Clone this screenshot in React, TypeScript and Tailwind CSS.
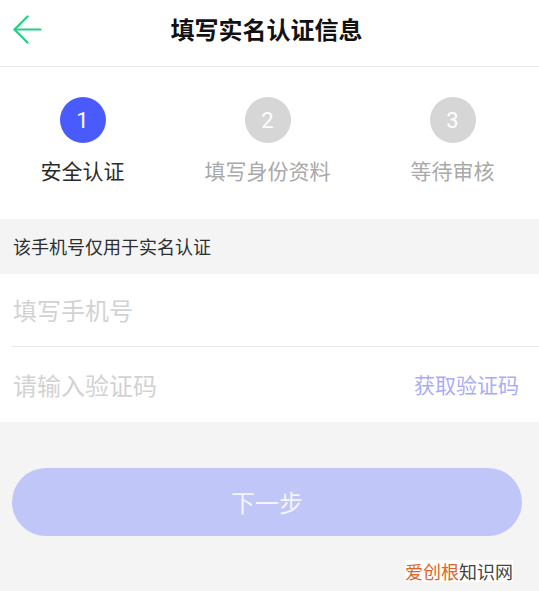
import React from 'react';

const steps = [
  { n: '1', label: '安全认证', active: true },
  { n: '2', label: '填写身份资料', active: false },
  { n: '3', label: '等待审核', active: false },
];

export default function App() {
  return (
    <div
      className="min-h-screen overflow-hidden bg-[#f4f4f4]"
      style={{ fontFamily: '"Noto Sans CJK SC", "Noto Sans", sans-serif' }}
    >
      {/* Header */}
      <div className="relative flex h-[67px] items-center justify-center border-b border-[#e6e6e6] bg-white pb-[9px]">
        <svg
          className="absolute left-[13px] top-[15px]"
          width="29"
          height="29"
          viewBox="0 0 29 29"
          fill="none"
          stroke="#27cf86"
          strokeWidth="2.2"
          strokeLinecap="round"
          strokeLinejoin="round"
        >
          <path d="M27.5 14.5H1.5" />
          <path d="M14.5 1.5L1.5 14.5L14.5 27.5" />
        </svg>
        <h1 className="-translate-x-[3px] text-[24px] font-bold leading-none text-[#111]">填写实名认证信息</h1>
      </div>

      {/* Steps */}
      <div className="h-[152px] bg-white pt-[30px]">
        <div className="-ml-[10px] flex">
          {steps.map(s => (
            <div key={s.n} className="flex w-[185px] shrink-0 flex-col items-center">
              <div
                className={`flex h-[46px] w-[46px] items-center justify-center rounded-full text-[22px] text-white ${
                  s.active ? 'bg-[#4a5bfd]' : 'bg-[#d6d6d6]'
                }`}
                style={{ fontFamily: 'Roboto, sans-serif' }}
              >
                {s.n}
              </div>
              <span
                className={`mt-[15px] whitespace-nowrap text-[21px] leading-[24px] ${
                  s.active ? 'text-[#2b2b2b]' : 'text-[#a9a9a9]'
                }`}
              >
                {s.label}
              </span>
            </div>
          ))}
        </div>
      </div>

      {/* Notice */}
      <div className="flex h-[55px] items-center pl-[13px] text-[18px] text-[#2e2e2e]">该手机号仅用于实名认证</div>

      {/* Inputs */}
      <div className="bg-white">
        <div className="ml-[12px] flex h-[73px] items-center border-b border-[#e8e8e8]">
          <span className="pl-[1px] text-[24px] text-[#d2d2d2]">填写手机号</span>
        </div>
        <div className="flex h-[75px] items-center justify-between pl-[13px] pr-[20px]">
          <span className="text-[24px] text-[#d2d2d2]">请输入验证码</span>
          <span className="text-[21px] text-[#a9adf6]">获取验证码</span>
        </div>
      </div>

      {/* Button */}
      <div className="px-[12px] pt-[46px]">
        <button className="flex h-[68px] w-[510px] items-center justify-center rounded-full bg-[#c0c6f8] text-[24px] text-[#f4f5ff]">
          下一步
        </button>
      </div>

      {/* Watermark */}
      <div className="flex justify-end pr-[26px] pt-[24px]">
        <span className="bg-white text-[18px] leading-[22px]">
          <span className="text-[#e0642a]">爱创根</span>
          <span className="text-[#444]">知识网</span>
        </span>
      </div>
    </div>
  );
}
